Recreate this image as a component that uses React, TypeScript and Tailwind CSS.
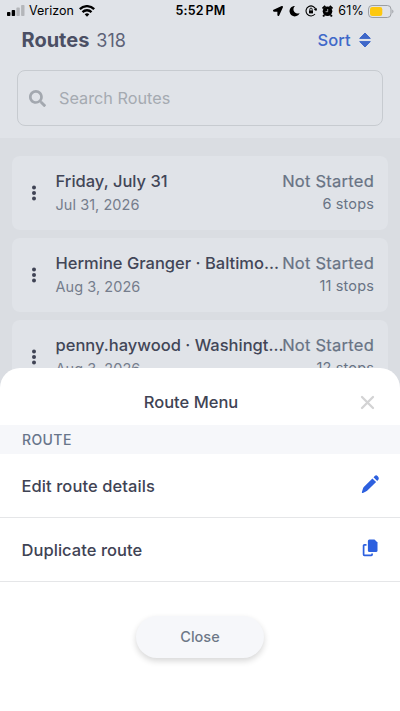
import { FaLocationArrow, FaMoon, FaSearch } from 'react-icons/fa';

interface RouteItem {
  name: string;
  date: string;
  stops: string;
}

const routes: RouteItem[] = [
  { name: 'Friday, July 31', date: 'Jul 31, 2026', stops: '6 stops' },
  { name: 'Hermine Granger · Baltimo...', date: 'Aug 3, 2026', stops: '11 stops' },
  { name: 'penny.haywood · Washingt...', date: 'Aug 3, 2026', stops: '12 stops' },
];

function StatusBar() {
  return (
    <div className="grid h-[22px] grid-cols-[1fr_auto_1fr] items-center pl-[7px] pr-[6px] text-[12.5px] text-black">
      <div className="flex items-center">
        <svg aria-hidden="true" width="18" height="12" viewBox="0 0 18 12">
          <rect x="0" y="7" width="3.4" height="4" rx="0.8" />
          <rect x="4.7" y="5" width="3.4" height="6" rx="0.8" />
          <rect x="9.4" y="2.6" width="3.4" height="8.4" rx="0.8" fill="#b4b6ba" />
          <rect x="14.1" y="0" width="3.4" height="11" rx="0.8" fill="#b4b6ba" />
        </svg>
        <span className="ml-1">Verizon</span>
        <svg aria-hidden="true" className="ml-[5px]" width="16" height="12" viewBox="0 0 16 12" fill="none" stroke="currentColor" strokeWidth="2.3">
          <path d="M.8 4.1a10.2 10.2 0 0 1 14.4 0" />
          <path d="M3.5 7.1a6.4 6.4 0 0 1 9 0" />
          <path d="M8 11.7 5.7 9.3a3.3 3.3 0 0 1 4.6 0Z" fill="currentColor" stroke="none" />
        </svg>
      </div>
      <span className="font-semibold tracking-[0.2px] [word-spacing:-1.5px]">5:52 PM</span>
      <div className="flex items-center justify-end">
        <FaLocationArrow className="h-[10px] w-[10px]" />
        <FaMoon className="ml-[6px] h-[10.5px] w-[10.5px] -rotate-12" />
        <svg aria-hidden="true" className="ml-[6px]" width="12" height="12" viewBox="0 0 12 12" fill="none" stroke="currentColor" strokeWidth="1.1">
          <path d="M10.9 4.7A5 5 0 1 0 10 9M9.3 4.2l1.7 1 .8-1.8" />
          <rect x="4" y="5.4" width="4" height="3" fill="currentColor" stroke="none" />
          <path d="M4.8 5.5V4.3a1.2 1.2 0 0 1 2.4 0v1.2" strokeWidth="0.9" />
        </svg>
        <svg aria-hidden="true" className="ml-[5px]" width="11" height="12" viewBox="0 0 11 12">
          <circle cx="5.5" cy="6.3" r="4.8" />
          <path d="M.5 3.6 3.3.9M10.5 3.6 7.7.9M2.2 10l-1 1.5M8.8 10l1 1.5" stroke="currentColor" strokeWidth="2" />
          <path d="M5.7 4v2.7H3.6" stroke="#dfe2e7" strokeWidth="0.7" fill="none" />
        </svg>
        <span className="ml-[5px] tracking-[0.2px]">61%</span>
        <svg aria-hidden="true" className="ml-[4px]" width="26" height="13" viewBox="0 0 26 13">
          <rect x="0.5" y="0.5" width="22.5" height="12" rx="3.6" fill="none" stroke="#9b9ea3" />
          <rect x="2" y="2" width="12.3" height="9" rx="2.3" fill="#fdc80f" />
          <path d="M24.3 4.6c1.5.6 1.5 3.2 0 3.8Z" fill="#9b9ea3" />
        </svg>
      </div>
    </div>
  );
}

function RouteCard({ name, date, stops }: RouteItem) {
  return (
    <li className="flex h-[74px] items-center rounded-lg bg-[#e0e3e8] pl-[19px] pr-[14px]">
      <svg aria-hidden="true" className="-mt-px shrink-0" width="6" height="16" viewBox="0 0 6 16" fill="#3f4354">
        <circle cx="3" cy="2.6" r="2" />
        <circle cx="3" cy="8" r="2" />
        <circle cx="3" cy="13.4" r="2" />
      </svg>
      <div className="ml-[18.5px] w-0 flex-1 whitespace-nowrap">
        <p className="text-[16.5px] font-medium leading-6 text-[#424657]">{name}</p>
        <p className="text-[14.5px] leading-6 tracking-[0.05px] text-[#757d8c]">{date}</p>
      </div>
      <div className="-mt-[3px] shrink-0 text-right text-[#687384]">
        <p className="text-[16.5px] leading-6 tracking-[0.25px] [-webkit-text-stroke:0.2px]">Not Started</p>
        <p className="text-[14.5px] leading-[21px] tracking-[0.15px]">{stops}</p>
      </div>
    </li>
  );
}

function RouteMenu() {
  return (
    <section className="absolute inset-x-0 bottom-0 h-[343px] rounded-t-[20px] bg-white text-[#3f4354]">
      <header className="flex h-[57px] items-center pl-[22px] pr-[25px] pt-[11px]">
        <h2 className="flex-1 text-center text-[16.5px] font-medium">Route Menu</h2>
        <button type="button" aria-label="Dismiss">
          <svg aria-hidden="true" width="15" height="15" viewBox="0 0 15 15" stroke="#d3d3d4" strokeWidth="2.3" strokeLinecap="round">
            <path d="m2 2 11 11M13 2 2 13" />
          </svg>
        </button>
      </header>
      <h3 className="flex h-[29px] items-center bg-[#f6f7fa] px-[22px] text-[14px] font-medium tracking-[0.4px] text-[#68758a]">ROUTE</h3>
      <button type="button" className="flex h-16 w-full items-center justify-between border-b border-[#e5e6e8] pl-[21.5px] pr-[20.5px] pt-0.5 text-[16.5px] font-medium tracking-[0.08px]">
        Edit route details
        <svg aria-hidden="true" className="-translate-y-[2.5px]" width="19" height="19" viewBox="0 0 19 19" fill="#2d60df">
          <path d="M11.4 3.9 15.1 7.6 6.4 16.1Q5.7 16.7 4.9 17.1L1.9 18.4Q.6 18.8.9 17.5L1.9 14.2Q2.2 13.2 2.8 12.5Z" />
          <path d="M12.5 2.8 14 1.3Q15.2.2 16.8 1.8 18.6 3.5 17.5 5L16.2 6.5Z" />
        </svg>
      </button>
      <button type="button" className="flex h-16 w-full items-center justify-between border-b border-[#e5e6e8] pl-[21.5px] pr-[22px] pt-0.5 text-[16.5px] font-medium tracking-[0.05px]">
        Duplicate route
        <svg aria-hidden="true" className="-translate-y-[3px]" width="16" height="18" viewBox="0 0 16 18" fill="#2d60df">
          <path d="M7.4.5h5.1L15.5 3.5v8.1q0 1.5-1.5 1.5H7.4q-1.5 0-1.5-1.5V2Q5.900.5 7.4.5Z" />
          <path d="M4.5 5.8H2.4Q1.6 5.800 1.6 6.600V15.600Q1.6 16.400 2.4 16.400H9.300Q10.100 16.400 10.100 15.600V14.400" fill="none" stroke="#2d60df" strokeWidth="1.7" />
        </svg>
      </button>
      <button type="button" className="mx-auto mt-[34px] block h-[42px] w-[128px] rounded-full bg-[#f6f7fa] text-[14.5px] font-medium text-[#6d7887] shadow-[0_3px_6px_rgba(0,0,0,0.16)]">
        Close
      </button>
    </section>
  );
}

export default function App() {
  return (
    <main className="relative h-[711px] w-[400px] overflow-hidden bg-[#dadde2] font-['Inter',sans-serif]">
      <div className="h-[138px] bg-[#e0e3e8]">
        <StatusBar />
        <div className="flex h-9 items-center px-[21.5px]">
          <h1 className="text-[20px] font-bold text-[#4b4f64]">Routes</h1>
          <span className="ml-[7px] text-[18px] text-[#5d6277]">318</span>
          <button type="button" className="ml-auto flex items-center gap-2 pr-2 text-[16.5px] font-medium text-[#3f68c9]">
            Sort
            <svg aria-hidden="true" width="12" height="16" viewBox="0 0 12 16" fill="currentColor" stroke="currentColor" strokeWidth="1" strokeLinejoin="round">
              <path d="M6 1 11.3 6.4H.7ZM6 15 .7 9.6h10.6Z" />
            </svg>
          </button>
        </div>
        <div className="mx-[17px] mt-3 flex h-14 items-center gap-3 rounded-lg border border-[#c7cbd0] px-[11px]">
          <FaSearch className="h-[17px] w-[17px] text-[#a3a8af]" />
          <span className="pl-px text-[16.25px] text-[#a5aab1]">Search Routes</span>
        </div>
      </div>
      <ul className="flex flex-col gap-2 px-3 pt-[18px]">
        {routes.map((route) => (
          <RouteCard key={route.name} {...route} />
        ))}
      </ul>
      <RouteMenu />
    </main>
  );
}
